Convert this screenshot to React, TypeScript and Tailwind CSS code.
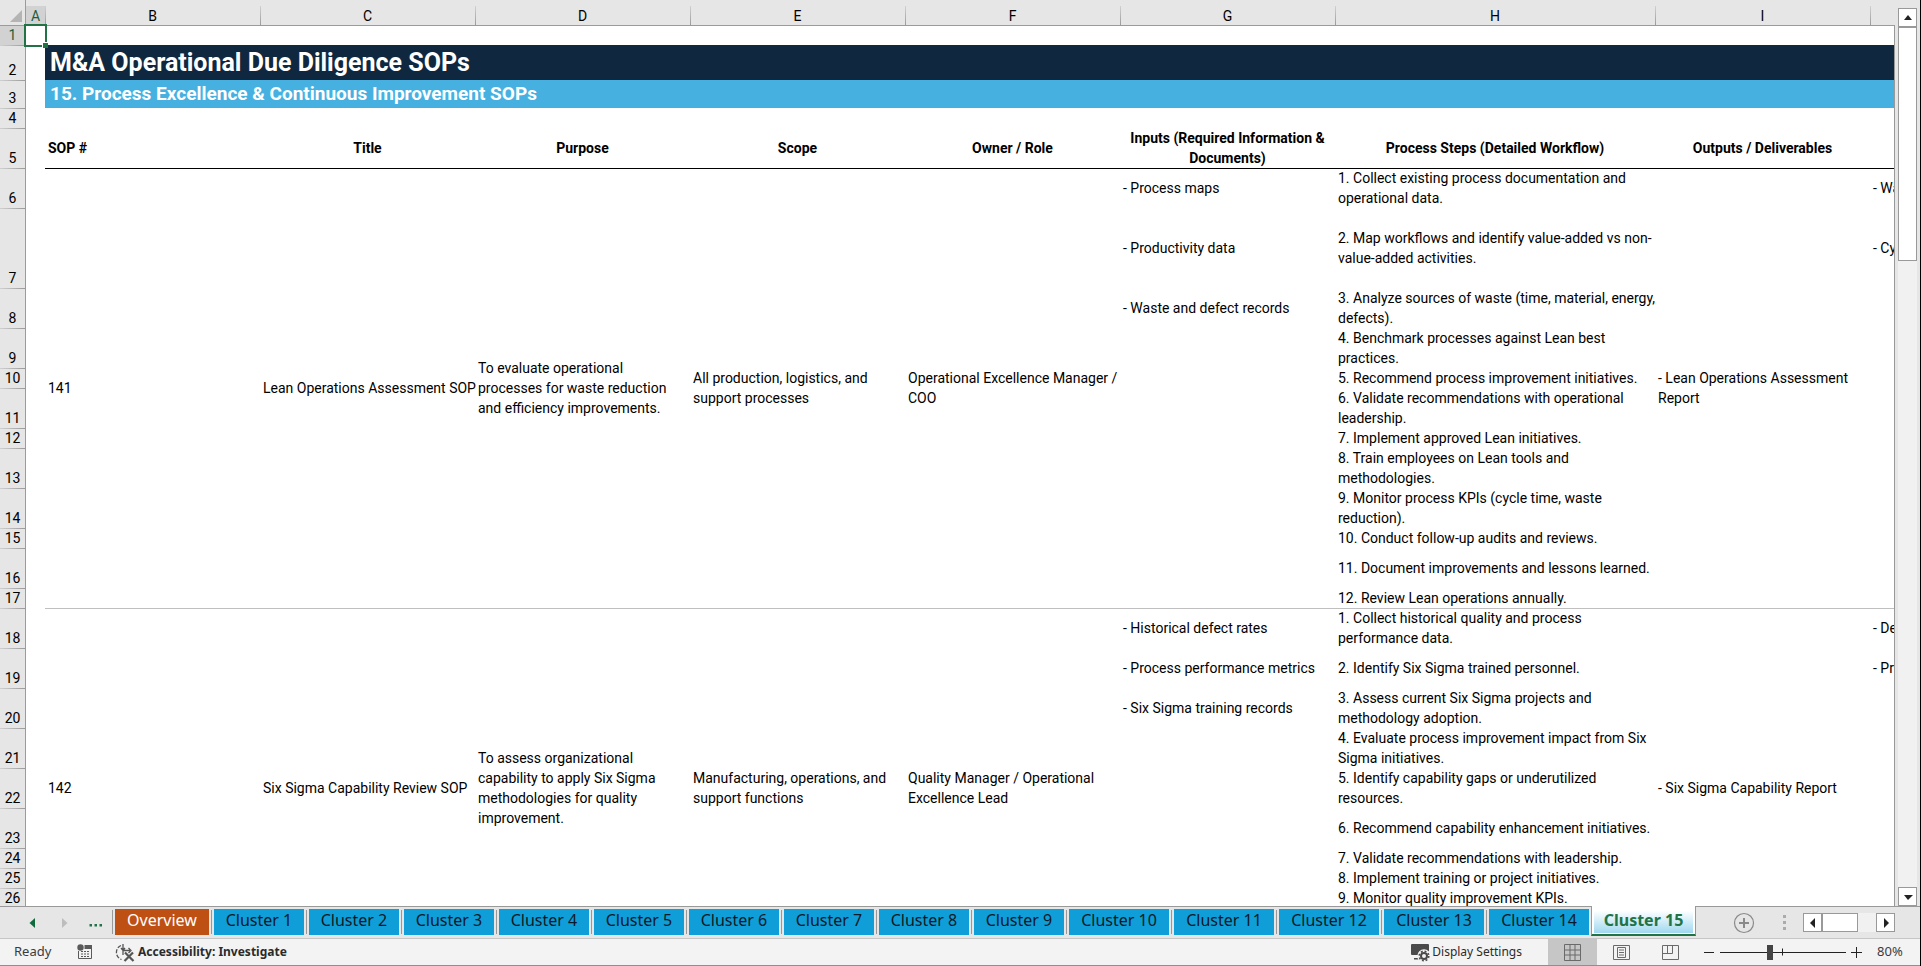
import React, { useState } from 'react';
import clsx from 'clsx';

interface SheetRow {
  n: number;
  height: string;
  input?: string;
  step?: string;
  kpi?: string;
}

interface Sop {
  id: string;
  title: string;
  purpose: string;
  scope: string;
  owner: string;
  output: string;
  rows: SheetRow[];
}

const SINGLE = 'h-5';
const DOUBLE = 'h-10';

const sops: Sop[] = [
  {
    id: '141',
    title: 'Lean Operations Assessment SOP',
    purpose: 'To evaluate operational\nprocesses for waste reduction\nand efficiency improvements.',
    scope: 'All production, logistics, and\nsupport processes',
    owner: 'Operational Excellence Manager /\nCOO',
    output: '- Lean Operations Assessment\nReport',
    rows: [
      { n: 6, height: DOUBLE, input: '- Process maps', step: '1. Collect existing process documentation and\noperational data.', kpi: '- Waste' },
      { n: 7, height: 'h-20', input: '- Productivity data', step: '2. Map workflows and identify value-added vs non-\nvalue-added activities.', kpi: '- Cycle' },
      { n: 8, height: DOUBLE, input: '- Waste and defect records', step: '3. Analyze sources of waste (time, material, energy,\ndefects).' },
      { n: 9, height: DOUBLE, step: '4. Benchmark processes against Lean best\npractices.' },
      { n: 10, height: SINGLE, step: '5. Recommend process improvement initiatives.' },
      { n: 11, height: DOUBLE, step: '6. Validate recommendations with operational\nleadership.' },
      { n: 12, height: SINGLE, step: '7. Implement approved Lean initiatives.' },
      { n: 13, height: DOUBLE, step: '8. Train employees on Lean tools and\nmethodologies.' },
      { n: 14, height: DOUBLE, step: '9. Monitor process KPIs (cycle time, waste\nreduction).' },
      { n: 15, height: SINGLE, step: '10. Conduct follow-up audits and reviews.' },
      { n: 16, height: DOUBLE, step: '11. Document improvements and lessons learned.' },
      { n: 17, height: SINGLE, step: '12. Review Lean operations annually.' },
    ],
  },
  {
    id: '142',
    title: 'Six Sigma Capability Review SOP',
    purpose: 'To assess organizational\ncapability to apply Six Sigma\nmethodologies for quality\nimprovement.',
    scope: 'Manufacturing, operations, and\nsupport functions',
    owner: 'Quality Manager / Operational\nExcellence Lead',
    output: '- Six Sigma Capability Report',
    rows: [
      { n: 18, height: DOUBLE, input: '- Historical defect rates', step: '1. Collect historical quality and process\nperformance data.', kpi: '- Defect' },
      { n: 19, height: DOUBLE, input: '- Process performance metrics', step: '2. Identify Six Sigma trained personnel.', kpi: '- Process' },
      { n: 20, height: DOUBLE, input: '- Six Sigma training records', step: '3. Assess current Six Sigma projects and\nmethodology adoption.' },
      { n: 21, height: DOUBLE, step: '4. Evaluate process improvement impact from Six\nSigma initiatives.' },
      { n: 22, height: DOUBLE, step: '5. Identify capability gaps or underutilized\nresources.' },
      { n: 23, height: DOUBLE, step: '6. Recommend capability enhancement initiatives.' },
      { n: 24, height: SINGLE, step: '7. Validate recommendations with leadership.' },
      { n: 25, height: SINGLE, step: '8. Implement training or project initiatives.' },
      { n: 26, height: SINGLE, step: '9. Monitor quality improvement KPIs.' },
      { n: 27, height: DOUBLE },
      { n: 28, height: SINGLE },
    ],
  },
];

const headings = [
  'Title',
  'Purpose',
  'Scope',
  'Owner / Role',
  'Inputs (Required Information &\nDocuments)',
  'Process Steps (Detailed Workflow)',
  'Outputs / Deliverables',
];

const columns = ['B', 'C', 'D', 'E', 'F', 'G', 'H', 'I', ''];

const clusters = Array.from({ length: 15 }, (_, i) => `Cluster ${i + 1}`);

const RowNumber = ({ n, active }: { n?: number; active?: boolean }) => (
  <th
    scope="row"
    className={clsx(
      'border-r border-[#9b9b9b] p-0 text-center align-bottom text-[14px] font-normal leading-[19px]',
      active
        ? 'bg-[#d2d2d2] text-[#1f5c40]'
        : 'bg-[#e6e6e6] bg-[linear-gradient(to_right,#d0d0d0,#9b9b9b)] bg-[length:100%_1px] bg-no-repeat'
    )}
  >
    {n}
  </th>
);

const SopBlock = ({ sop, line }: { sop: Sop; line: string }) => {
  const span = sop.rows.length;
  return (
    <tbody>
      {sop.rows.map((row, i) => {
        const first = i === 0;
        const cell = clsx('whitespace-pre px-[3px] py-0', first && line);
        return (
          <tr key={row.n} className={row.height}>
            <RowNumber n={row.step ? row.n : undefined} />
            {first && (
              <>
                <td rowSpan={span} className="p-0" />
                <td rowSpan={span} className={cell}>{sop.id}</td>
                <td rowSpan={span} className={cell}>{sop.title}</td>
                <td rowSpan={span} className={cell}>{sop.purpose}</td>
                <td rowSpan={span} className={cell}>{sop.scope}</td>
                <td rowSpan={span} className={cell}>{sop.owner}</td>
              </>
            )}
            <td className={cell}>{row.input}</td>
            <td className={cell}>{row.step}</td>
            {first && <td rowSpan={span} className={cell}>{sop.output}</td>}
            <td className={cell}>{row.kpi}</td>
          </tr>
        );
      })}
    </tbody>
  );
};

const Sheet = () => (
  <table className="w-[2085px] table-fixed border-separate border-spacing-0 bg-white text-left text-[14px] leading-5 text-black">
    <colgroup>
      <col className="w-[26px]" />
      <col className="w-[19px]" />
      <col className="w-[215px]" span={6} />
      <col className="w-[320px]" />
      <col className="w-[215px]" span={2} />
    </colgroup>
    <thead>
      <tr className="h-[26px] bg-[#e6e6e6]">
        <th className="border-b border-r border-[#9b9b9b] p-0">
          <svg width="12" height="12" viewBox="0 0 12 12" className="ml-[10px] mt-[6px]" aria-hidden="true">
            <path d="M12 0V12H0Z" fill="#b4b4b4" />
          </svg>
        </th>
        <th
          scope="col"
          className="border-b border-[#9b9b9b] bg-[linear-gradient(#d2d2d2,#d2d2d2)] bg-[length:100%_19px] bg-bottom bg-no-repeat p-0 pt-[7px] text-center font-normal leading-[18px] text-[#1f5c40]"
        >
          A
        </th>
        {columns.map((c) => (
          <th
            key={c}
            scope="col"
            className="border-b border-[#9b9b9b] bg-[linear-gradient(to_bottom,#d0d0d0,#9b9b9b)] bg-[length:1px_19px] bg-left-bottom bg-no-repeat p-0 pt-[7px] text-center font-normal leading-[18px]"
          >
            {c}
          </th>
        ))}
      </tr>
    </thead>
    <tbody>
      <tr className="h-[19px]">
        <RowNumber n={1} active />
        <td className="relative p-0">
          {/* active cell outline and fill handle */}
          <div className="absolute -inset-[2px] border-2 border-[#217346]" />
          <div className="absolute -bottom-[3px] -right-[3px] size-[6px] border-l border-t border-white bg-[#217346]" />
        </td>
        <td colSpan={9} className="p-0" />
      </tr>
      <tr className="h-[35px]">
        <RowNumber n={2} />
        <td className="p-0" />
        <td colSpan={9} className="bg-[#0f2840] px-[5px] py-0 text-[25px] font-bold leading-[35px] text-white">
          M&amp;A Operational Due Diligence SOPs
        </td>
      </tr>
      <tr className="h-[28px]">
        <RowNumber n={3} />
        <td className="p-0" />
        <td colSpan={9} className="bg-[#46b1e1] px-[5px] py-0 text-[19px] font-bold leading-7 text-white">
          15. Process Excellence &amp; Continuous Improvement SOPs
        </td>
      </tr>
      <tr className="h-5">
        <RowNumber n={4} />
        <td colSpan={10} className="p-0" />
      </tr>
      <tr className="h-10">
        <RowNumber n={5} />
        <td className="p-0" />
        <th scope="col" className="px-[3px] py-0 font-bold">SOP #</th>
        {headings.map((h) => (
          <th key={h} scope="col" className="whitespace-pre p-0 text-center font-bold">
            {h}
          </th>
        ))}
        <td className="p-0" />
      </tr>
    </tbody>
    <SopBlock sop={sops[0]} line="shadow-[inset_0_1px_0_#000]" />
    <SopBlock sop={sops[1]} line="shadow-[inset_0_1px_0_#bfbfbf]" />
  </table>
);

const arrowPaths = {
  up: 'M9 6L13 11H5Z',
  down: 'M5 7H14L9 12Z',
  left: 'M6 9L11 4V14Z',
  right: 'M12 9L7 4V14Z',
};

const ScrollButton = ({ dir }: { dir: keyof typeof arrowPaths }) => (
  <button
    type="button"
    aria-label={`Scroll ${dir}`}
    className="flex size-[19px] shrink-0 items-center justify-center border border-[#999999] bg-white"
  >
    <svg width="18" height="18" viewBox="0 0 18 18" className="shrink-0">
      <path d={arrowPaths[dir]} fill="#222" />
    </svg>
  </button>
);

const VerticalScroll = () => (
  <div className="flex w-[25px] shrink-0 flex-col items-center pt-2">
    <ScrollButton dir="up" />
    <div className="min-h-0 w-[19px] flex-1 bg-[#f1f1f1]">
      <div className="h-[234px] border border-[#999999] bg-white" />
    </div>
    <ScrollButton dir="down" />
  </div>
);

const TabBar = ({ active, onSelect }: { active: string; onSelect: (name: string) => void }) => (
  <div className="flex h-[33px] shrink-0 items-start border-b border-t border-b-[#c6c6c6] border-t-[#999999] pr-[25px] font-['Noto_Sans','Open_Sans',sans-serif] text-[16px]">
    <div className="flex h-[31px] w-28 shrink-0 items-center pl-[29px]">
      <button type="button" aria-label="Previous sheets" className="w-8">
        <svg width="8" height="10" viewBox="0 0 8 10">
          <path d="M0.5 5L6 0V10Z" fill="#0f6b3c" />
        </svg>
      </button>
      <button type="button" aria-label="Next sheets" className="w-7">
        <svg width="8" height="10" viewBox="0 0 8 10">
          <path d="M6.5 5L1 0V10Z" fill="#bdbdbd" />
        </svg>
      </button>
      <button type="button" aria-label="More sheets">
        <svg width="14" height="12" viewBox="0 0 14 12">
          <path d="M0.5 7h2.5v2.5h-2.5zM5.5 7h2.5v2.5h-2.5zM10.5 7h2.5v2.5h-2.5z" fill="#217346" />
        </svg>
      </button>
    </div>
    <div className="mt-[3px] h-6 w-px shrink-0 bg-[#999999]" />
    <button
      type="button"
      onClick={() => onSelect('Overview')}
      className="ml-[2px] mt-[2px] h-[26px] w-[94px] shrink-0 bg-[#bf5014] pb-[3px] leading-[23px] text-white"
    >
      Overview
    </button>
    {clusters.map((name, i) => {
      if (name === active) {
        return (
          <button
            key={name}
            type="button"
            onClick={() => onSelect(name)}
            className="relative -mt-px ml-[2px] h-[30px] w-[105px] shrink-0 border-x border-b-2 border-x-[#999999] border-b-[#217346] bg-white p-[2px] font-bold leading-[22px] text-[#217346]"
          >
            <span className="block h-[25px] bg-[linear-gradient(to_bottom,#ffffff_10%,#9fd8f0)] pt-px">{name}</span>
          </button>
        );
      }
      return (
        <React.Fragment key={name}>
          <div className="ml-[2px] mt-[3px] h-6 w-px shrink-0 bg-[#999999]" />
          <button
            type="button"
            onClick={() => onSelect(name)}
            className={clsx(
              'ml-[2px] mt-[2px] h-[26px] shrink-0 bg-[#109ed9] pb-[3px] leading-[23px] text-[#0b1a26]',
              i < 9 ? 'w-[90px]' : 'w-[100px]'
            )}
          >
            {name}
          </button>
        </React.Fragment>
      );
    })}
    <button type="button" aria-label="New sheet" className="ml-[37px] mt-[5px] shrink-0">
      <svg width="22" height="22" viewBox="0 0 22 22" fill="none" stroke="#8a8a8a">
        <circle cx="11" cy="11" r="9.5" strokeWidth="1.2" />
        <path d="M6 11h10M11 6v10" strokeWidth="2" />
      </svg>
    </button>
    <div className="ml-auto flex h-[31px] items-center">
      <svg width="3" height="15" viewBox="0 0 3 15" className="mr-[17px]" aria-hidden="true">
        <path d="M0 0h3v3H0zM0 6h3v3H0zM0 12h3v3H0z" fill="#ababab" />
      </svg>
      <ScrollButton dir="left" />
      <div className="h-[19px] w-[54px] bg-[#f1f1f1]">
        <div className="h-[19px] w-9 border border-[#999999] bg-white" />
      </div>
      <ScrollButton dir="right" />
    </div>
  </div>
);

const StatusBar = () => {
  const [zoom, setZoom] = useState(80);
  return (
    <div className="flex h-[27px] shrink-0 items-center border-b border-[#8f8f8f] bg-[#f3f3f3] pl-[14px] font-['Noto_Sans','Open_Sans',sans-serif] text-[13px] text-[#3b3b3b]">
      <span className="w-[63px]">Ready</span>
      <button type="button" aria-label="Record macro" className="w-[38px]">
        <svg width="16" height="16" viewBox="0 0 16 16" fill="none">
          <path d="M1.5 7V14.5H14.5V4" stroke="#5a5a5a" />
          <path d="M7.5 1h7.5v4H7.5z" fill="#5a5a5a" />
          <circle cx="3.5" cy="3.5" r="3.2" fill="#5a5a5a" />
          <path d="M4 7.5h2M7 7.5h2M10 7.5h2M4 10h2M7 10h2M10 10h2M4 12.5h2M7 12.5h2M10 12.5h2" stroke="#5a5a5a" />
        </svg>
      </button>
      <button type="button" className="flex items-center gap-[3px] text-[12px] font-bold text-[#2b2b2b]">
        <svg width="20" height="19" viewBox="0 0 20 19" fill="none" stroke="#555">
          <path d="M6 2.5A7.5 7.5 0 0 0 6.5 16.5" strokeWidth="1.3" strokeDasharray="4 1.5" />
          <path d="M8 1v6M6 5l2 2.5L10 5M8 7.5h7M13.5 5l2.5 2.5L13.5 10M8 8v4" strokeWidth="1.3" />
          <path d="M10 9.5L18.5 18M18 9.5L9.5 18" strokeWidth="2.2" />
        </svg>
        Accessibility: Investigate
      </button>
      <button type="button" className="ml-auto flex h-full items-center gap-[2px] pr-[26px] text-[12px] text-[#2b2b2b]">
        <svg width="19" height="19" viewBox="0 0 19 19">
          <path d="M1 1h16a1 1 0 0 1 1 1v7H11v3H1a1 1 0 0 1-1-1V2a1 1 0 0 1 1-1zM3 15h5v1.5H3z" fill="#4a4a4a" />
          <circle cx="13" cy="13" r="4.2" fill="none" stroke="#f3f3f3" strokeWidth="5" />
          <circle cx="13" cy="13" r="3" fill="none" stroke="#4a4a4a" strokeWidth="2" />
          <circle cx="13" cy="13" r="4.8" fill="none" stroke="#4a4a4a" strokeWidth="1.6" strokeDasharray="1.9 1.87" />
        </svg>
        Display Settings
      </button>
      <button type="button" aria-label="Normal view" className="flex h-full w-[49px] items-center justify-center bg-[#c6c6c6]">
        <svg width="17" height="17" viewBox="0 0 17 17" fill="none" stroke="#6a6a6a">
          <path d="M.5.5h16v16H.5zM6 .5v16M11 .5v16M.5 6h16M.5 11h16" />
        </svg>
      </button>
      <button type="button" aria-label="Page layout" className="flex h-full w-[49px] items-center justify-center">
        <svg width="17" height="17" viewBox="0 0 17 17" fill="none" stroke="#6a6a6a">
          <path d="M.5 1.5h16v14H.5zM4.5 3.5h8v10h-8zM6 6h5M6 8.5h5M6 11h5" />
        </svg>
      </button>
      <button type="button" aria-label="Page break preview" className="flex h-full w-[49px] items-center justify-center">
        <svg width="17" height="17" viewBox="0 0 17 17" fill="none" stroke="#6a6a6a">
          <path d="M.5 1.5h16v14H.5zM5.5 1.5v8M10.5 1.5v8M.5 9.5h10" />
        </svg>
      </button>
      <button type="button" aria-label="Zoom out" className="ml-[9px] mr-[6px]" onClick={() => setZoom(Math.max(10, zoom - 10))}>
        <svg width="10" height="11" viewBox="0 0 10 11">
          <path d="M0 5.5h10" stroke="#222" />
        </svg>
      </button>
      <div className="relative flex w-[126px] items-center">
        {/* 100% tick */}
        <div className="absolute left-[62px] top-1/2 h-[7px] w-px -translate-y-1/2 bg-[#222]" />
        <input
          type="range"
          aria-label="Zoom"
          min={10}
          max={190}
          value={zoom}
          onChange={(e) => setZoom(Number(e.target.value))}
          className="h-4 w-full appearance-none bg-[linear-gradient(#222,#222)] bg-[length:100%_1px] bg-center bg-no-repeat [&::-webkit-slider-thumb]:h-[15px] [&::-webkit-slider-thumb]:w-[6px] [&::-webkit-slider-thumb]:appearance-none [&::-webkit-slider-thumb]:bg-[#444]"
        />
      </div>
      <button type="button" aria-label="Zoom in" className="ml-[5px]" onClick={() => setZoom(Math.min(190, zoom + 10))}>
        <svg width="11" height="11" viewBox="0 0 11 11">
          <path d="M0 5.5h11M5.5 0v11" stroke="#222" />
        </svg>
      </button>
      <span className="w-[58px] pl-[15px]">{zoom}%</span>
    </div>
  );
};

export default function App() {
  const [active, setActive] = useState('Cluster 15');

  return (
    <div className="flex h-screen flex-col overflow-hidden border-r border-black bg-[#e6e6e6] font-[Roboto,'Liberation_Sans',sans-serif]">
      <main className="flex min-h-0 flex-1">
        <div className="min-w-0 flex-1 overflow-hidden bg-[linear-gradient(#999,#999)] bg-[length:1px_calc(100%-25px)] bg-right-bottom bg-no-repeat pr-px">
          <div className="h-full overflow-hidden">
            <Sheet />
          </div>
        </div>
        <VerticalScroll />
      </main>
      <TabBar active={active} onSelect={setActive} />
      <StatusBar />
    </div>
  );
}
